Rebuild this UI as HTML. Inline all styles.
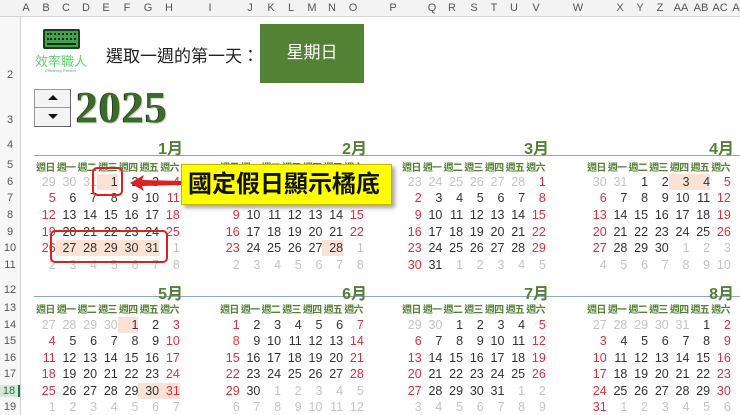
<!DOCTYPE html>
<html><head><meta charset="utf-8"><style>
*{margin:0;padding:0;box-sizing:border-box}
body{width:740px;height:415px;overflow:hidden;background:#fff;position:relative;font-family:"Liberation Sans","Noto Sans CJK TC",sans-serif;color:#333}
.a{position:absolute}
#colh{left:0;top:0;width:740px;height:17px;background:#f3f3f3;border-bottom:1px solid #d4d4d4}
#colh span{position:absolute;top:2px;font-size:11px;color:#555;transform:translateX(-50%)}
#rowh{left:0;top:17px;width:21px;height:398px;background:#f7f7f7;border-right:1px solid #d4d4d4}
#rowh span{position:absolute;left:0;width:20px;text-align:center;font-size:11px;color:#555;transform:translateY(-50%)}
.blk{position:absolute;width:145px}
.t{position:absolute;right:0;font-size:16px;color:#548235;font-weight:bold}
.wk{position:absolute;left:0;display:flex}
.wk b{display:block;width:20.7px;text-align:center;font-size:10px;color:#548235;white-space:nowrap;letter-spacing:-0.8px;font-weight:bold}
.r{position:absolute;left:0;height:16px;display:flex}
.r i{font-style:normal;width:20.7px;text-align:right;font-size:12.5px;line-height:16px;color:#333;display:block}
.r i.g{color:#c4c4c4}.r i.d{color:#e0303a}.r i.h{background:#fbe2d5}
.ln{position:absolute;left:34px;width:706px;height:1px;background:#8fa9c9}
</style></head><body>
<div id="colh" class="a">
<span style="left:26px">A</span><span style="left:46px">B</span><span style="left:66px">C</span><span style="left:86px">D</span><span style="left:106px">E</span><span style="left:127px">F</span><span style="left:148px">G</span><span style="left:169px">H</span><span style="left:210px">I</span><span style="left:250px">J</span><span style="left:271px">K</span><span style="left:291px">L</span><span style="left:312px">M</span><span style="left:332px">N</span><span style="left:353px">O</span><span style="left:393px">P</span><span style="left:432px">Q</span><span style="left:452px">R</span><span style="left:474px">S</span><span style="left:494px">T</span><span style="left:514px">U</span><span style="left:536px">V</span><span style="left:578px">W</span><span style="left:620px">X</span><span style="left:640px">Y</span><span style="left:660px">Z</span><span style="left:681px">AA</span><span style="left:701px">AB</span><span style="left:720px">AC</span><span style="left:740px">AD</span>
</div>
<div id="rowh" class="a">
<span style="top:58px">2</span><span style="top:103px">3</span><span style="top:128px">4</span><span style="top:148px">5</span><span style="top:165px">6</span><span style="top:181px">7</span><span style="top:198px">8</span><span style="top:215px">9</span><span style="top:231px">10</span><span style="top:248px">11</span><span style="top:273px">12</span><span style="top:291px">13</span><span style="top:308px">14</span><span style="top:324px">15</span><span style="top:341px">16</span><span style="top:357px">17</span><span style="top:374px;background:#d8e6d8;color:#217346;border-right:2px solid #217346">18</span><span style="top:390px">19</span>
</div>

<div class="a" style="left:43px;top:29px;width:37px;height:20px;border:2px solid #1e3d1e;background:#3fa34d;border-radius:2px"></div>
<div class="a" style="left:47px;top:33px;width:29px;height:3px;border-top:2px dotted #0f2a12"></div>
<div class="a" style="left:47px;top:38px;width:29px;height:3px;border-top:2px dotted #0f2a12"></div>
<div class="a" style="left:47px;top:43px;width:29px;height:2px;background:#0f2a12"></div>
<div class="a" style="left:35px;top:51px;font-size:13px;color:#5fd36a;white-space:nowrap">效率職人</div>
<div class="a" style="left:45px;top:68px;font-size:4px;color:#5a9">Efficiency Person</div>

<div class="a" style="left:106px;top:42px;font-size:17px;color:#222;white-space:nowrap">選取一週的第一天：</div>
<div class="a" style="left:260px;top:24px;width:104px;height:59px;background:#548235;color:#fff;font-size:17px;text-align:center;line-height:57px">星期日</div>

<div class="a" style="left:34px;top:89px;width:37px;height:38px;border:1px solid #999;border-right-color:#666;border-bottom-color:#666;background:#f4f4f4"></div>
<div class="a" style="left:35px;top:107px;width:35px;height:1px;background:#999"></div>
<div class="a" style="left:48px;top:95px;width:0;height:0;border-left:5px solid transparent;border-right:5px solid transparent;border-bottom:5px solid #111"></div>
<div class="a" style="left:48px;top:114px;width:0;height:0;border-left:5px solid transparent;border-right:5px solid transparent;border-top:5px solid #111"></div>
<div class="a" style="left:76px;top:82px;font-family:'Liberation Serif',serif;font-weight:bold;font-size:44px;color:#3b6a2b;text-shadow:1px 1px 0 #c9d8c0,-1px 0 0 #1f3f18;letter-spacing:1px">2025</div>

<div class="ln" style="top:155px"></div>
<div class="ln" style="top:296px"></div>

<!-- Jan -->
<div class="blk" style="left:35px;top:0">
<div class="t" style="top:135px;right:-3px">1月</div>
<div class="wk" style="top:159px"><b>週日</b><b>週一</b><b>週二</b><b>週三</b><b>週四</b><b>週五</b><b>週六</b></div>
<div class="r" style="top:174px"><i class="g">29</i><i class="g">30</i><i class="g">31</i><i class="h">1</i><i>2</i><i>3</i><i class="d">4</i></div>
<div class="r" style="top:190px"><i class="d">5</i><i>6</i><i>7</i><i>8</i><i>9</i><i>10</i><i class="d">11</i></div>
<div class="r" style="top:207px"><i class="d">12</i><i>13</i><i>14</i><i>15</i><i>16</i><i>17</i><i class="d">18</i></div>
<div class="r" style="top:224px"><i class="d">19</i><i>20</i><i>21</i><i>22</i><i>23</i><i>24</i><i class="d">25</i></div>
<div class="r" style="top:240px"><i class="d">26</i><i class="h">27</i><i class="h">28</i><i class="h">29</i><i class="h">30</i><i class="h">31</i><i class="g">1</i></div>
<div class="r" style="top:257px"><i class="g">2</i><i class="g">3</i><i class="g">4</i><i class="g">5</i><i class="g">6</i><i class="g">7</i><i class="g">8</i></div>
</div>
<!-- Feb -->
<div class="blk" style="left:219px;top:0">
<div class="t" style="top:135px;right:-3px">2月</div>
<div class="wk" style="top:159px"><b>週日</b><b>週一</b><b>週二</b><b>週三</b><b>週四</b><b>週五</b><b>週六</b></div>
<div class="r" style="top:174px"><i class="g">26</i><i class="g">27</i><i class="g">28</i><i class="g">29</i><i class="g">30</i><i class="g">31</i><i class="d">1</i></div>
<div class="r" style="top:190px"><i class="d">2</i><i>3</i><i>4</i><i>5</i><i>6</i><i>7</i><i class="d">8</i></div>
<div class="r" style="top:207px"><i class="d">9</i><i>10</i><i>11</i><i>12</i><i>13</i><i>14</i><i class="d">15</i></div>
<div class="r" style="top:224px"><i class="d">16</i><i>17</i><i>18</i><i>19</i><i>20</i><i>21</i><i class="d">22</i></div>
<div class="r" style="top:240px"><i class="d">23</i><i>24</i><i>25</i><i>26</i><i>27</i><i class="h">28</i><i class="g">1</i></div>
<div class="r" style="top:257px"><i class="g">2</i><i class="g">3</i><i class="g">4</i><i class="g">5</i><i class="g">6</i><i class="g">7</i><i class="g">8</i></div>
</div>
<!-- Mar -->
<div class="blk" style="left:401px;top:0">
<div class="t" style="top:135px;right:-3px">3月</div>
<div class="wk" style="top:159px"><b>週日</b><b>週一</b><b>週二</b><b>週三</b><b>週四</b><b>週五</b><b>週六</b></div>
<div class="r" style="top:174px"><i class="g">23</i><i class="g">24</i><i class="g">25</i><i class="g">26</i><i class="g">27</i><i class="g">28</i><i class="d">1</i></div>
<div class="r" style="top:190px"><i class="d">2</i><i>3</i><i>4</i><i>5</i><i>6</i><i>7</i><i class="d">8</i></div>
<div class="r" style="top:207px"><i class="d">9</i><i>10</i><i>11</i><i>12</i><i>13</i><i>14</i><i class="d">15</i></div>
<div class="r" style="top:224px"><i class="d">16</i><i>17</i><i>18</i><i>19</i><i>20</i><i>21</i><i class="d">22</i></div>
<div class="r" style="top:240px"><i class="d">23</i><i>24</i><i>25</i><i>26</i><i>27</i><i>28</i><i class="d">29</i></div>
<div class="r" style="top:257px"><i class="d">30</i><i>31</i><i class="g">1</i><i class="g">2</i><i class="g">3</i><i class="g">4</i><i class="g">5</i></div>
</div>
<!-- Apr -->
<div class="blk" style="left:586px;top:0">
<div class="t" style="top:135px;right:-3px">4月</div>
<div class="wk" style="top:159px"><b>週日</b><b>週一</b><b>週二</b><b>週三</b><b>週四</b><b>週五</b><b>週六</b></div>
<div class="r" style="top:174px"><i class="g">30</i><i class="g">31</i><i>1</i><i>2</i><i class="h">3</i><i class="h">4</i><i class="d">5</i></div>
<div class="r" style="top:190px"><i class="d">6</i><i>7</i><i>8</i><i>9</i><i>10</i><i>11</i><i class="d">12</i></div>
<div class="r" style="top:207px"><i class="d">13</i><i>14</i><i>15</i><i>16</i><i>17</i><i>18</i><i class="d">19</i></div>
<div class="r" style="top:224px"><i class="d">20</i><i>21</i><i>22</i><i>23</i><i>24</i><i>25</i><i class="d">26</i></div>
<div class="r" style="top:240px"><i class="d">27</i><i>28</i><i>29</i><i>30</i><i class="g">1</i><i class="g">2</i><i class="g">3</i></div>
<div class="r" style="top:257px"><i class="g">4</i><i class="g">5</i><i class="g">6</i><i class="g">7</i><i class="g">8</i><i class="g">9</i><i class="g">10</i></div>
</div>
<!-- May -->
<div class="blk" style="left:35px;top:0">
<div class="t" style="top:280px;right:-3px">5月</div>
<div class="wk" style="top:301px"><b>週日</b><b>週一</b><b>週二</b><b>週三</b><b>週四</b><b>週五</b><b>週六</b></div>
<div class="r" style="top:317px"><i class="g">27</i><i class="g">28</i><i class="g">29</i><i class="g">30</i><i class="h">1</i><i>2</i><i class="d">3</i></div>
<div class="r" style="top:333px"><i class="d">4</i><i>5</i><i>6</i><i>7</i><i>8</i><i>9</i><i class="d">10</i></div>
<div class="r" style="top:350px"><i class="d">11</i><i>12</i><i>13</i><i>14</i><i>15</i><i>16</i><i class="d">17</i></div>
<div class="r" style="top:366px"><i class="d">18</i><i>19</i><i>20</i><i>21</i><i>22</i><i>23</i><i class="d">24</i></div>
<div class="r" style="top:383px"><i class="d">25</i><i>26</i><i>27</i><i>28</i><i>29</i><i class="h">30</i><i class="d h">31</i></div>
<div class="r" style="top:399px"><i class="g">1</i><i class="g">2</i><i class="g">3</i><i class="g">4</i><i class="g">5</i><i class="g">6</i><i class="g">7</i></div>
</div>
<!-- Jun -->
<div class="blk" style="left:219px;top:0">
<div class="t" style="top:280px;right:-3px">6月</div>
<div class="wk" style="top:301px"><b>週日</b><b>週一</b><b>週二</b><b>週三</b><b>週四</b><b>週五</b><b>週六</b></div>
<div class="r" style="top:317px"><i class="d">1</i><i>2</i><i>3</i><i>4</i><i>5</i><i>6</i><i class="d">7</i></div>
<div class="r" style="top:333px"><i class="d">8</i><i>9</i><i>10</i><i>11</i><i>12</i><i>13</i><i class="d">14</i></div>
<div class="r" style="top:350px"><i class="d">15</i><i>16</i><i>17</i><i>18</i><i>19</i><i>20</i><i class="d">21</i></div>
<div class="r" style="top:366px"><i class="d">22</i><i>23</i><i>24</i><i>25</i><i>26</i><i>27</i><i class="d">28</i></div>
<div class="r" style="top:383px"><i class="d">29</i><i>30</i><i class="g">1</i><i class="g">2</i><i class="g">3</i><i class="g">4</i><i class="g">5</i></div>
<div class="r" style="top:399px"><i class="g">6</i><i class="g">7</i><i class="g">8</i><i class="g">9</i><i class="g">10</i><i class="g">11</i><i class="g">12</i></div>
</div>
<!-- Jul -->
<div class="blk" style="left:401px;top:0">
<div class="t" style="top:280px;right:-3px">7月</div>
<div class="wk" style="top:301px"><b>週日</b><b>週一</b><b>週二</b><b>週三</b><b>週四</b><b>週五</b><b>週六</b></div>
<div class="r" style="top:317px"><i class="g">29</i><i class="g">30</i><i>1</i><i>2</i><i>3</i><i>4</i><i class="d">5</i></div>
<div class="r" style="top:333px"><i class="d">6</i><i>7</i><i>8</i><i>9</i><i>10</i><i>11</i><i class="d">12</i></div>
<div class="r" style="top:350px"><i class="d">13</i><i>14</i><i>15</i><i>16</i><i>17</i><i>18</i><i class="d">19</i></div>
<div class="r" style="top:366px"><i class="d">20</i><i>21</i><i>22</i><i>23</i><i>24</i><i>25</i><i class="d">26</i></div>
<div class="r" style="top:383px"><i class="d">27</i><i>28</i><i>29</i><i>30</i><i>31</i><i class="g">1</i><i class="g">2</i></div>
<div class="r" style="top:399px"><i class="g">3</i><i class="g">4</i><i class="g">5</i><i class="g">6</i><i class="g">7</i><i class="g">8</i><i class="g">9</i></div>
</div>
<!-- Aug -->
<div class="blk" style="left:586px;top:0">
<div class="t" style="top:280px;right:-3px">8月</div>
<div class="wk" style="top:301px"><b>週日</b><b>週一</b><b>週二</b><b>週三</b><b>週四</b><b>週五</b><b>週六</b></div>
<div class="r" style="top:317px"><i class="g">27</i><i class="g">28</i><i class="g">29</i><i class="g">30</i><i class="g">31</i><i>1</i><i class="d">2</i></div>
<div class="r" style="top:333px"><i class="d">3</i><i>4</i><i>5</i><i>6</i><i>7</i><i>8</i><i class="d">9</i></div>
<div class="r" style="top:350px"><i class="d">10</i><i>11</i><i>12</i><i>13</i><i>14</i><i>15</i><i class="d">16</i></div>
<div class="r" style="top:366px"><i class="d">17</i><i>18</i><i>19</i><i>20</i><i>21</i><i>22</i><i class="d">23</i></div>
<div class="r" style="top:383px"><i class="d">24</i><i>25</i><i>26</i><i>27</i><i>28</i><i>29</i><i class="d">30</i></div>
<div class="r" style="top:399px"><i class="d">31</i><i class="g">1</i><i class="g">2</i><i class="g">3</i><i class="g">4</i><i class="g">5</i><i class="g">6</i></div>
</div>

<div class="a" style="left:92px;top:167px;width:31px;height:29px;border:2px solid #e02020;border-radius:5px"></div>
<div class="a" style="left:50px;top:230px;width:118px;height:33px;border:2px solid #e02020;border-radius:5px"></div>
<svg class="a" style="left:128px;top:174px" width="56" height="18"><path d="M2 9 L16 1 L14 6 L54 7 L54 11 L14 12 L16 17 Z" fill="#e02020"/></svg>
<div class="a" style="left:181px;top:164px;width:211px;height:41px;background:#ffff00;border:1px solid #c8b400;box-shadow:3px 3px 4px rgba(0,0,0,.35);font-size:24px;font-weight:bold;color:#111;line-height:40px;padding-left:6px;white-space:nowrap;overflow:hidden">國定假日顯示橘底</div>
</body></html>
